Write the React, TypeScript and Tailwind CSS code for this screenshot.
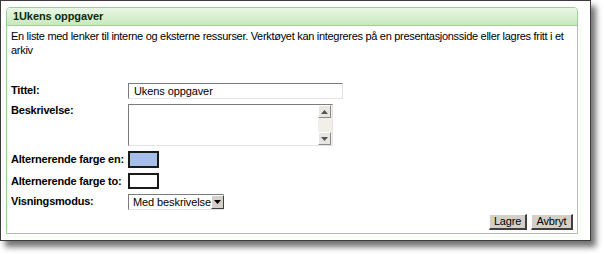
import React from "react";

const font = { fontFamily: '"Liberation Sans", Arial, sans-serif' };

function Inset({ className = "", children }: { className?: string; children?: React.ReactNode }) {
  return (
    <div
      className={
        "border-t border-l border-t-[#7b7b7b] border-l-[#7b7b7b] border-b border-r border-b-[#e4e4e4] border-r-[#e4e4e4] bg-white " +
        className
      }
    >
      {children}
    </div>
  );
}

function Arrow({ up }: { up?: boolean }) {
  return (
    <div className="w-[13px] h-[13px] bg-[#e8e6e0] border-t border-l border-t-white border-l-white border-b border-r border-b-[#8a8a8a] border-r-[#8a8a8a] flex items-center justify-center">
      <svg width="7" height="4" viewBox="0 0 7 4">
        {up ? <path d="M0 4 L3.5 0 L7 4 Z" fill="#555" /> : <path d="M0 0 L3.5 4 L7 0 Z" fill="#555" />}
      </svg>
    </div>
  );
}

function Btn({ children, w }: { children: React.ReactNode; w: string }) {
  return (
    <div
      className={
        "h-[16px] bg-[#d4d0c8] border-t border-l border-t-white border-l-white border-b-2 border-r-2 border-b-[#404040] border-r-[#404040] flex items-center justify-center text-[11px] tracking-[-0.2px] text-black leading-none " +
        w
      }
    >
      {children}
    </div>
  );
}

export default function App() {
  return (
    <div className="w-[604px] h-[254px] bg-white overflow-hidden" style={font}>
      <div className="w-[591px] h-[241px] bg-white border border-[#3c3c3c] shadow-[5px_6px_6px_rgba(0,0,0,0.55)] pl-[5px] pr-[12px] pt-[6px] pb-[6px] flex">
        <div className="flex-1 border border-[#9ccf94] rounded-t-[4px] flex flex-col">
          <div className="h-[18px] bg-gradient-to-b from-[#e9f7e5] to-[#c7e9bf] border-b border-[#9ccf94] rounded-t-[3px] flex items-center pl-[6px] pb-[1px]">
            <span className="text-[11px] font-bold text-[#102a0c] leading-none tracking-[-0.1px]">1Ukens oppgaver</span>
          </div>
          <div className="px-[4px] pt-[3px] flex-1 flex flex-col">
            <p className="text-[11px] leading-[14px] text-black tracking-[-0.3px] whitespace-nowrap">
              En liste med lenker til interne og eksterne ressurser. Verktøyet kan integreres på en presentasjonsside eller lagres fritt i et
              <br />
              arkiv
            </p>
            <div className="mt-[26px] grid grid-cols-[117px_1fr] gap-y-[5px] text-[11px] text-black">
              <div className="font-bold pt-[1px] leading-[13px] whitespace-nowrap tracking-[-0.2px]">Tittel:</div>
              <Inset className="w-[215px] h-[16px] flex items-center pl-[5px]">
                <span className="leading-none whitespace-nowrap tracking-[-0.1px]">Ukens oppgaver</span>
              </Inset>
              <div className="font-bold pt-[0px] leading-[13px] whitespace-nowrap tracking-[-0.2px]">Beskrivelse:</div>
              <Inset className="w-[205px] h-[42px] flex justify-end">
                <div className="w-[14px] bg-[#f1efe8] flex flex-col justify-between">
                  <Arrow up />
                  <Arrow />
                </div>
              </Inset>
              <div className="font-bold pt-[2px] leading-[13px] whitespace-nowrap tracking-[-0.2px]">Alternerende farge en:</div>
              <div className="w-[31px] h-[17px] bg-[#a5bfea] border-2 border-[#1a1a1a]" />
              <div className="font-bold pt-[2px] leading-[13px] whitespace-nowrap tracking-[-0.2px]">Alternerende farge to:</div>
              <div className="w-[31px] h-[16px] bg-white border-2 border-[#1a1a1a]" />
              <div className="font-bold pt-[1px] leading-[13px] whitespace-nowrap tracking-[-0.2px]">Visningsmodus:</div>
              <Inset className="w-[96px] h-[16px] flex items-center justify-between">
                <span className="pl-[4px] leading-none whitespace-nowrap tracking-[-0.1px]">Med beskrivelse</span>
                <div className="w-[13px] h-[14px] bg-[#d4d0c8] border-t border-l border-t-white border-l-white border-b border-r border-b-[#404040] border-r-[#404040] flex items-center justify-center shrink-0">
                  <svg width="7" height="4" viewBox="0 0 7 4">
                    <path d="M0 0 L3.5 4 L7 0 Z" fill="#000" />
                  </svg>
                </div>
              </Inset>
            </div>
            <div className="mt-[4px] flex justify-end gap-[4px] pr-[0px]">
              <Btn w="w-[38px]">Lagre</Btn>
              <Btn w="w-[42px]">Avbryt</Btn>
            </div>
          </div>
        </div>
      </div>
    </div>
  );
}
